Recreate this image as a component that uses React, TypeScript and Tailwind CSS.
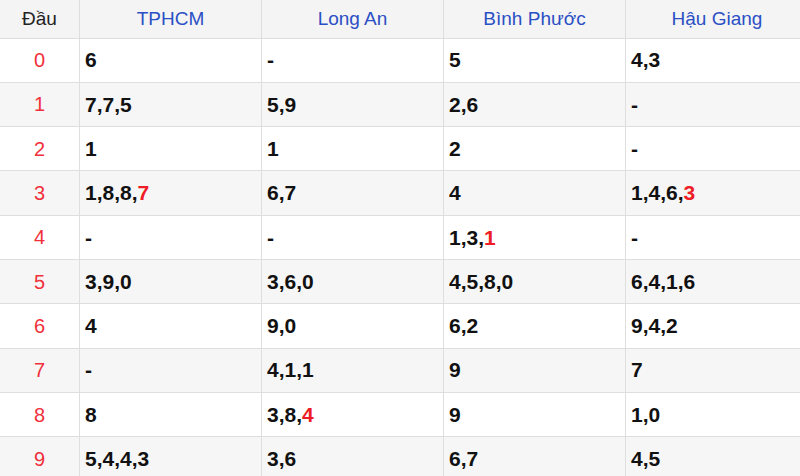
import React from "react";

type Cell = { n: string; red?: boolean }[];

const p = (s: string, redLast = false): Cell => {
  if (!redLast) return [{ n: s }];
  const i = s.lastIndexOf(",");
  return [{ n: s.slice(0, i + 1) }, { n: s.slice(i + 1), red: true }];
};

const headers = ["TPHCM", "Long An", "Bình Phước", "Hậu Giang"];

const rows: Cell[][] = [
  [p("6"), p("-"), p("5"), p("4,3")],
  [p("7,7,5"), p("5,9"), p("2,6"), p("-")],
  [p("1"), p("1"), p("2"), p("-")],
  [p("1,8,8,7", true), p("6,7"), p("4"), p("1,4,6,3", true)],
  [p("-"), p("-"), p("1,3,1", true), p("-")],
  [p("3,9,0"), p("3,6,0"), p("4,5,8,0"), p("6,4,1,6")],
  [p("4"), p("9,0"), p("6,2"), p("9,4,2")],
  [p("-"), p("4,1,1"), p("9"), p("7")],
  [p("8"), p("3,8,4", true), p("9"), p("1,0")],
  [p("5,4,4,3"), p("3,6"), p("6,7"), p("4,5")],
];

export default function App() {
  return (
    <div
      className="w-[800px] h-[476px] overflow-hidden bg-white"
      style={{ fontFamily: '"Liberation Sans", Arial, sans-serif' }}
    >
      <div className="w-[808px]">
        <div className="flex h-[38.5px] bg-[#f4f4f4] border-b border-[#dedede]">
          <div className="w-[80px] shrink-0 flex items-center justify-center text-[19px] text-[#222] border-r border-[#dedede]">
            Đầu
          </div>
          {headers.map((h, i) => (
            <div
              key={h}
              className={`w-[182px] shrink-0 flex items-center justify-center text-[19px] text-[#2b4fc4] ${
                i < 3 ? "border-r border-[#dedede]" : ""
              }`}
            >
              {h}
            </div>
          ))}
        </div>
        {rows.map((r, ri) => (
          <div
            key={ri}
            className={`flex h-[44.3px] border-b border-[#dedede] ${
              ri % 2 === 1 ? "bg-[#f6f6f6]" : "bg-white"
            }`}
          >
            <div className="w-[80px] shrink-0 flex items-center justify-center text-[20px] text-[#f0303a] border-r border-[#dedede]">
              {ri}
            </div>
            {r.map((c, ci) => (
              <div
                key={ci}
                className={`w-[182px] shrink-0 flex items-center pl-[5px] text-[21px] font-bold text-[#111] ${
                  ci < 3 ? "border-r border-[#dedede]" : ""
                }`}
              >
                {c.map((s, si) => (
                  <span key={si} className={s.red ? "text-[#ee1c25]" : ""}>
                    {s.n}
                  </span>
                ))}
              </div>
            ))}
          </div>
        ))}
      </div>
    </div>
  );
}
